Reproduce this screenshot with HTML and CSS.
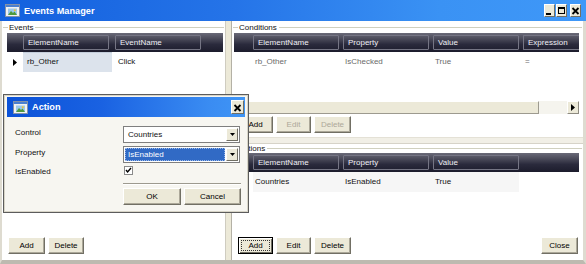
FILE: index.html
```html
<!DOCTYPE html>
<html lang="en">
<head>
  <meta charset="UTF-8">
  <title>Events Manager</title>
  <link rel="stylesheet" href="styles.css">
</head>
<body>
  <div class="window">
    <div class="titlebar">
      <svg class="app-icon" width="15" height="13" viewBox="0 0 15 13">
        <rect x="0.5" y="0.5" width="14" height="12" fill="#f2f2f2" stroke="#8492a8"/>
        <rect x="1" y="1" width="13" height="2" fill="#4a7fd0"/>
        <rect x="3" y="4.5" width="9" height="6.5" fill="#9cc8ec"/>
        <path d="M3 11 L6 7 L8 9 L9.5 7.5 L12 11 Z" fill="#4f9a3c"/>
        <circle cx="9.8" cy="6.2" r="1" fill="#f2c230"/>
      </svg>
      <span class="title">Events Manager</span>
      <div class="caption-buttons">
        <span class="cap-btn"><svg width="9" height="11" viewBox="0 0 9 11"><rect x="1" y="8" width="5" height="2" fill="#000"/></svg></span>
        <span class="cap-btn"><svg width="9" height="11" viewBox="0 0 9 11"><rect x="1.5" y="2.5" width="6" height="6" fill="none" stroke="#000"/><rect x="1" y="2" width="7" height="2" fill="#000"/></svg></span>
        <span class="cap-btn cap-close"><svg width="9" height="11" viewBox="0 0 9 11"><path d="M1.5 3 L7.5 9 M7.5 3 L1.5 9" stroke="#000" stroke-width="1.8"/></svg></span>
      </div>
    </div>

    <div class="client">
      <div class="pane pane-left">
        <div class="group-title"><span>Events</span></div>
        <div class="grid events-grid">
          <div class="grid-head">
            <div class="row-head"></div>
            <div class="hcol ev-col"><div class="hbox">ElementName</div></div>
            <div class="hcol ev-col"><div class="hbox">EventName</div></div>
          </div>
          <div class="grid-row">
            <div class="row-head">
              <svg width="5" height="7" viewBox="0 0 5 7"><path d="M0 0 L4 3.5 L0 7 Z" fill="#000"/></svg>
            </div>
            <div class="cell ev-col cell-selected">rb_Other</div>
            <div class="cell ev-col">Click</div>
          </div>
        </div>
        <div class="buttons">
          <button class="btn w37">Add</button>
          <button class="btn w36">Delete</button>
        </div>
      </div>

      <div class="vsplit"></div>

      <div class="pane pane-right">
        <div class="group conditions">
          <div class="group-title"><span>Conditions</span></div>
          <div class="grid">
            <div class="grid-head">
              <div class="row-head wide"></div>
              <div class="hcol col"><div class="hbox">ElementName</div></div>
              <div class="hcol col"><div class="hbox">Property</div></div>
              <div class="hcol col"><div class="hbox">Value</div></div>
              <div class="hcol col"><div class="hbox open">Expression</div></div>
            </div>
            <div class="grid-row muted">
              <div class="row-head wide"></div>
              <div class="cell col">rb_Other</div>
              <div class="cell col">IsChecked</div>
              <div class="cell col">True</div>
              <div class="cell col">=</div>
            </div>
            <div class="grid-space"></div>
            <div class="hscroll">
              <div class="thumb"></div>
              <div class="track"></div>
              <div class="arrow-btn">
                <svg width="4" height="7" viewBox="0 0 4 7"><path d="M0 0 L4 3.5 L0 7 Z" fill="#000"/></svg>
              </div>
            </div>
          </div>
          <div class="buttons">
            <button class="btn w35">Add</button>
            <button class="btn w35" disabled>Edit</button>
            <button class="btn w37" disabled>Delete</button>
          </div>
        </div>

        <div class="hsplit"></div>

        <div class="group actions">
          <div class="group-title short"><span>Actions</span></div>
          <div class="grid">
            <div class="grid-head">
              <div class="row-head wide"></div>
              <div class="hcol col"><div class="hbox">ElementName</div></div>
              <div class="hcol col"><div class="hbox">Property</div></div>
              <div class="hcol col"><div class="hbox">Value</div></div>
            </div>
            <div class="grid-row">
              <div class="row-head wide"></div>
              <div class="cell col shaded">Countries</div>
              <div class="cell col shaded">IsEnabled</div>
              <div class="cell col shaded">True</div>
            </div>
          </div>
          <div class="buttons">
            <button class="btn w35 focused"><span>Add</span></button>
            <button class="btn w35">Edit</button>
            <button class="btn w37">Delete</button>
            <button class="btn w37 push-right">Close</button>
          </div>
        </div>
      </div>
    </div>

    <div class="dialog">
      <div class="dialog-title">
        <svg class="app-icon" width="15" height="13" viewBox="0 0 15 13">
          <rect x="0.5" y="0.5" width="14" height="12" fill="#f2f2f2" stroke="#8492a8"/>
          <rect x="1" y="1" width="13" height="2" fill="#4a7fd0"/>
          <rect x="3" y="4.5" width="9" height="6.5" fill="#9cc8ec"/>
          <path d="M3 11 L6 7 L8 9 L9.5 7.5 L12 11 Z" fill="#4f9a3c"/>
          <circle cx="9.8" cy="6.2" r="1" fill="#f2c230"/>
        </svg>
        <span class="title">Action</span>
        <span class="cap-btn dlg-close"><svg width="9" height="11" viewBox="0 0 9 11"><path d="M1.5 3 L7.5 9 M7.5 3 L1.5 9" stroke="#000" stroke-width="1.8"/></svg></span>
      </div>
      <div class="dialog-body">
        <div class="form">
          <label>Control</label>
          <div class="combo">
            <span class="combo-text">Countries</span>
            <span class="combo-btn"><svg width="5" height="3" viewBox="0 0 5 3"><path d="M0 0 L5 0 L2.5 3 Z" fill="#000"/></svg></span>
          </div>
          <label>Property</label>
          <div class="combo">
            <span class="combo-text selected">IsEnabled</span>
            <span class="combo-btn"><svg width="5" height="3" viewBox="0 0 5 3"><path d="M0 0 L5 0 L2.5 3 Z" fill="#000"/></svg></span>
          </div>
          <label>IsEnabled</label>
          <div class="check">
            <svg width="9" height="9" viewBox="0 0 9 9"><rect x="0.5" y="0.5" width="8" height="8" fill="#fff" stroke="#8a8a8a"/><path d="M2 4 L3.6 6 L7 2" fill="none" stroke="#000" stroke-width="1.4"/></svg>
          </div>
        </div>
        <div class="separator"></div>
        <div class="dialog-buttons">
          <button class="btn w58">OK</button>
          <button class="btn w57">Cancel</button>
        </div>
      </div>
    </div>
  </div>
</body>
</html>
```

FILE: styles.css
```css
body { margin: 0; font-family: "Liberation Sans", Arial, sans-serif; font-size: 8px; color: #111; }
.window { position: relative; width: 586px; height: 264px; overflow: hidden; background: #fff; }
.titlebar { height: 21px; display: flex; align-items: center; padding-left: 5px; background: linear-gradient(to right, #1360de, #2574e8 40%, #3a92f4 75%, #3f98f8); color: #fff; }
.title { font-weight: bold; font-size: 9.2px; margin-left: 4px; }
.caption-buttons { margin-left: auto; display: flex; gap: 1px; margin-right: 5px; }
.cap-btn { width: 11px; height: 13px; display: flex; align-items: center; justify-content: center; background: #ece9d8; border: 1px solid; border-color: #fff #716f64 #716f64 #fff; box-sizing: border-box; }
.cap-btn.cap-close { margin-left: 2px; }

.client { display: flex; height: 243px; box-sizing: border-box; border-left: 2px solid #dedbd0; border-right: 3px solid #dedbd0; border-bottom: 4px solid #bdbab0; }
.pane { display: flex; flex-direction: column; min-width: 0; }
.pane-left { width: 223px; flex: none; }
.pane-right { flex: 1; }
.vsplit { width: 7px; flex: none; background: #ece9d8; border-left: 1px solid #cfccc0; box-sizing: border-box; border-right: 1px solid #b4b1a6; }
.hsplit { height: 7px; flex: none; background: #f1efe6; border-top: 1px solid #e4e1d6; border-bottom: 1px solid #d6d3c8; box-sizing: border-box; }

.group { display: flex; flex-direction: column; }
.conditions { height: 116px; flex: none; }
.actions { flex: 1; }
.group-title { height: 12px; flex: none; display: flex; align-items: center; padding-left: 1px; }
.group-title::before { content: ""; width: 5px; border-top: 1px solid #d0d0bf; }
.group-title::after { content: ""; flex: 1; border-top: 1px solid #d0d0bf; margin-right: 1px; }
.group-title span { padding: 0 2px 0 1px; }
.group-title.short { height: 9px; }

.grid { margin: 0 4px 0 2px; overflow: hidden; }
.events-grid { margin: 0 2px 0 5px; }
.grid-head { height: 19px; display: flex; align-items: center; background: linear-gradient(#6a6a78, #4b4b5a 30%, #2a2a3c 60%, #1c1c2c); color: #eeeef4; }
.row-head { width: 16px; flex: none; display: flex; align-items: center; padding-left: 6px; box-sizing: border-box; }
.row-head.wide { width: 19px; }
.hcol { flex: none; }
.ev-col { width: 92px; }
.col { width: 90px; }
.hbox { width: 86px; height: 15px; box-sizing: border-box; border: 1px solid #757584; border-radius: 1px; padding-left: 4px; line-height: 13px; }
.hbox.open { border-right: none; }
.grid-row { height: 20px; display: flex; align-items: center; }
.grid-row .row-head { height: 20px; }
.cell { height: 20px; line-height: 20px; padding-left: 3px; box-sizing: border-box; flex: none; }
.cell-selected { width: 89px; margin-right: 3px; background: #dce3ec; border-top: 1px solid #c4cedb; line-height: 18px; padding-left: 4px; }
.muted { color: #6a6a6a; }
.muted .cell { padding-left: 2px; }
.shaded { background: #f6f6f6; padding-left: 2px; }
.shaded:nth-child(4) { width: 86px; }
.grid-space { height: 29px; }
.hscroll { height: 13px; display: flex; }
.thumb { width: 305px; flex: none; background: #ece9d8; border: 1px solid; border-color: #fff #9d9a8f #9d9a8f #fff; box-sizing: border-box; }
.track { flex: 1; background: #f5f4ee; }
.arrow-btn { width: 12px; flex: none; display: flex; align-items: center; justify-content: center; background: #ece9d8; border: 1px solid; border-color: #fff #8d8a80 #8d8a80 #fff; box-sizing: border-box; }

.buttons { display: flex; gap: 3px; padding-left: 6px; }
.conditions .buttons { margin-top: 2px; }
.pane-left .buttons, .actions .buttons { margin-top: auto; padding-bottom: 6px; }
.actions .buttons { padding-right: 5px; }
.push-right { margin-left: auto; }
.btn { height: 17px; padding: 0; font: inherit; color: #000; background: #ece9d8; border: 1px solid; border-color: #fff #716f64 #716f64 #fff; box-shadow: inset -1px -1px #aca899; box-sizing: border-box; }
.btn:disabled { color: #aca899; }
.btn.focused { border-color: #000; box-shadow: inset 1px 1px #fff, inset -1px -1px #716f64; padding: 2px; }
.btn.focused span { display: block; height: 100%; border: 1px dotted #333; box-sizing: border-box; line-height: 9px; }
.w35 { width: 35px; }
.w36 { width: 36px; }
.w37 { width: 37px; }
.w57 { width: 57px; }
.w58 { width: 58px; }

.dialog { position: absolute; left: 3px; top: 94px; width: 246px; height: 119px; box-sizing: border-box; background: #f7f6f1; border: 1px solid #5c5c5c; padding: 2px 3px 3px; box-shadow: inset 0 0 0 1px #d8d5c8; }
.dialog-title { height: 20px; display: flex; align-items: center; padding-left: 6px; color: #fff; background: linear-gradient(to right, #0b52d8, #1a62e2 40%, #3a8cf2 85%, #3f95f6); }
.dlg-close { margin-left: auto; margin-right: 1px; width: 13px; height: 14px; }
.dialog-body { padding: 9px 0 0 8px; }
.form { display: grid; grid-template-columns: 108px 117px; grid-template-rows: 17px 17px 12px; row-gap: 3px; }
.form label { padding-top: 2px; }
.form label:nth-of-type(3) { padding-top: 1px; }
.combo { display: flex; align-items: center; background: #fff; border: 1px solid #7f7f7f; box-sizing: border-box; padding: 1px; }
.combo-text { flex: 1; height: 100%; line-height: 13px; padding-left: 3px; }
.combo-text.selected { background: #316ac5; color: #fff; outline: 1px dotted #9bb8e8; outline-offset: -1px; margin-right: 1px; }
.combo-btn { width: 12px; height: 100%; display: flex; align-items: center; justify-content: center; background: #ece9d8; border: 1px solid; border-color: #fff #716f64 #716f64 #fff; box-sizing: border-box; }
.check { padding-left: 1px; }
.check svg { display: block; }
.separator { margin: 5px 0 0 108px; width: 118px; border-top: 1px solid #9d9a8f; border-bottom: 1px solid #fff; }
.dialog-buttons { margin: 3px 0 0 108px; display: flex; gap: 3px; }
```
